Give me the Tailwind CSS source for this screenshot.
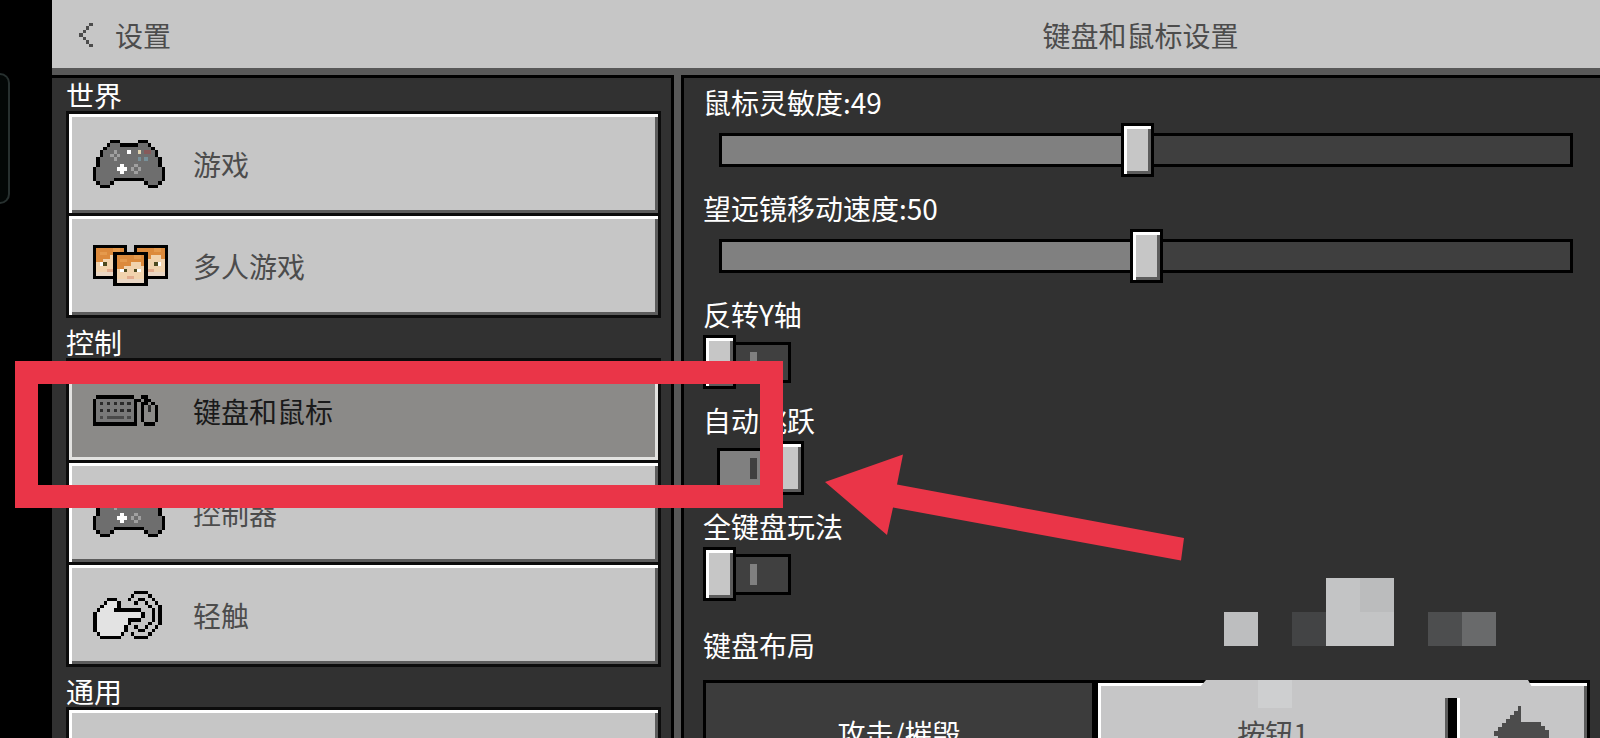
<!DOCTYPE html>
<html lang="zh-CN">
<head>
  <meta charset="UTF-8">
  <meta name="viewport" content="width=device-width, initial-scale=1">
  <title>键盘和鼠标设置</title>
  <script src="https://cdn.jsdelivr.net/npm/@tailwindcss/browser@4"></script>
</head>
<body class="relative flex h-screen overflow-hidden bg-black font-['Noto_Sans_CJK_SC',sans-serif] text-[28px] leading-8 font-normal text-white">

  <!-- Phone edge handle -->
  <div class="w-[52px] shrink-0 pt-[73px]">
    <div class="h-[131px] w-[10px] rounded-r-xl border-2 border-l-0 border-[#27302f] bg-[#030706]"></div>
  </div>

  <div class="flex min-w-0 flex-1 flex-col bg-[#585858]">
    <header class="grid h-[68px] shrink-0 grid-cols-[622fr_919fr] items-center gap-[7px] bg-[#c6c6c6] pt-px text-[#4c4c4c]">
      <button type="button" class="flex items-center gap-[22px] pl-[27px] text-left">
        <svg class="h-6 w-[14px]" viewBox="0 0 4 7" shape-rendering="crispEdges" stroke="#4c4c4c" aria-hidden="true">
          <path d="M3 .5h1M2 1.5h1M1 2.5h1M0 3.5h1M1 4.5h1M2 5.5h1M3 6.5h1"/>
        </svg>
        <span>设置</span>
      </button>
      <h1 class="text-center">键盘和鼠标设置</h1>
    </header>

    <main class="mt-[7px] grid min-h-0 flex-1 grid-cols-[622fr_919fr] gap-[7px]">

      <!-- Sidebar -->
      <nav class="min-w-0 overflow-hidden border-t-[3px] border-r-[3px] border-black bg-[#313131] pt-px pr-[10px] pl-[14px]">
        <h2>世界</h2>
        <div class="flex flex-col gap-[3px] border-[3px] border-[#0c0c0c] bg-[#0c0c0c] text-[#4c4c4c]">
          <button type="button" class="flex h-[99px] items-center bg-[#c6c6c6] pl-6 text-left shadow-[inset_3px_3px_0_#fff,inset_-3px_-3px_0_#5c5c5c]">
            <span class="w-[100px] shrink-0">
              <svg class="h-12 w-[72px]" viewBox="0 0 21 14" shape-rendering="crispEdges" fill="none" aria-hidden="true">
                <path fill="#6e6e6e" d="M5 1h3v1h5v-1h3v1h1v1h1v2h1v3h1v4h-1v1h-3v-1h-1v-1h-9v1h-1v1h-3v-1h-1v-4h1v-3h1v-2h1v-1h1z"/>
                <path stroke="#000" d="M5 .5h3M13 .5h3M4 1.5h1M8 1.5h5M16 1.5h1M3 2.5h1M17 2.5h1M2.5 3v2M18.5 3v2M1.5 5v3M19.5 5v3M.5 8v4M20.5 8v4M1 12.5h1M5 12.5h1M6 11.5h9M15 12.5h1M19 12.5h1M2 13.5h3M16 13.5h3"/>
                <path stroke="#a0a0a0" d="M6 3.5h1M5 4.5h1M7 4.5h1M6 5.5h1M12 7.5h1M11 8.5h1M13 8.5h1M12 9.5h1"/>
                <path stroke="#fff" d="M10 3.5h1M8 7.5h1M7 8.5h3M8 9.5h1"/>
                <path stroke="#e0d3b0" d="M13 3.5h1"/>
                <path stroke="#875a5a" d="M15 3.5h2"/>
                <path stroke="#779099" d="M13 5.5h1M15 5.5h1"/>
              </svg>
            </span>
            <span>游戏</span>
          </button>
          <button type="button" class="flex h-[99px] items-center bg-[#c6c6c6] pl-6 text-left shadow-[inset_3px_3px_0_#fff,inset_-3px_-3px_0_#5c5c5c]">
            <span class="w-[100px] shrink-0">
              <svg class="h-[41px] w-[75px]" viewBox="0 0 22 12" shape-rendering="crispEdges" aria-hidden="true">
                <defs>
                  <g id="head">
                    <path fill="#000" d="M0 0h10v10h-10z"/>
                    <path fill="#f1d3ae" d="M1 1h8v8h-8z"/>
                    <path fill="#dc8a3c" d="M1 1h8v3h-1v-1h-3v1h-2v1h-2z"/>
                    <path fill="#e59a4d" d="M2 2h2v1h-2zM6 1h2v1h-2z"/>
                    <path fill="#fff" d="M2 5h1v1h-1zM7 5h1v1h-1z"/>
                    <path fill="#4d4a20" d="M3 5h1v1h-1zM6 5h1v1h-1z"/>
                    <path fill="#e2ab8d" d="M4 7h2v1h-2z"/>
                    <path fill="#e9d6c4" d="M1 8h8v1h-8z"/>
                  </g>
                </defs>
                <use href="#head"/>
                <use href="#head" x="12"/>
                <use href="#head" x="6" y="2"/>
              </svg>
            </span>
            <span>多人游戏</span>
          </button>
        </div>

        <h2 class="pt-2">控制</h2>
        <div class="flex flex-col gap-[3px] border-[3px] border-[#0c0c0c] bg-[#0c0c0c] text-[#4c4c4c]">
          <button type="button" aria-current="page" class="flex h-[99px] items-center bg-[#8b8a88] pl-6 text-left text-[#1a1a1a] shadow-[inset_0_0_0_3px_#e2e2e0]">
            <span class="w-[100px] shrink-0">
              <svg class="h-[31px] w-[65px]" viewBox="0 0 19 9" shape-rendering="crispEdges" fill="none" aria-hidden="true">
                <path fill="#797979" d="M1 1h11v7h-11z"/>
                <path fill="#8b8a88" d="M15 3h3v5h-3z"/>
                <path stroke="#000" d="M1 .5h11M.5 1v8M12.5 1v8M1 8.5h11M13 1.5h1M14 .5h2M15 1.5h2M14 2.5h2M17 2.5h1M14.5 3v5M18.5 3v5M15 8.5h3"/>
                <path stroke="#2b2b2b" d="M2 2.5h1M4 2.5h1M6 2.5h1M8 2.5h1M10 2.5h1M2 4.5h1M4 4.5h1M6 4.5h1M8 4.5h1M10 4.5h1M16.5 3v2"/>
                <path stroke="#4a4a4a" d="M2 6.5h1M4 6.5h5M10 6.5h1"/>
              </svg>
            </span>
            <span>键盘和鼠标</span>
          </button>
          <button type="button" class="flex h-[99px] items-center bg-[#c6c6c6] pl-6 text-left shadow-[inset_3px_3px_0_#fff,inset_-3px_-3px_0_#5c5c5c]">
            <span class="w-[100px] shrink-0">
              <svg class="h-12 w-[72px]" viewBox="0 0 21 14" shape-rendering="crispEdges" fill="none" aria-hidden="true">
                <path fill="#6e6e6e" d="M5 1h3v1h5v-1h3v1h1v1h1v2h1v3h1v4h-1v1h-3v-1h-1v-1h-9v1h-1v1h-3v-1h-1v-4h1v-3h1v-2h1v-1h1z"/>
                <path stroke="#000" d="M5 .5h3M13 .5h3M4 1.5h1M8 1.5h5M16 1.5h1M3 2.5h1M17 2.5h1M2.5 3v2M18.5 3v2M1.5 5v3M19.5 5v3M.5 8v4M20.5 8v4M1 12.5h1M5 12.5h1M6 11.5h9M15 12.5h1M19 12.5h1M2 13.5h3M16 13.5h3"/>
                <path stroke="#a0a0a0" d="M6 3.5h1M5 4.5h1M7 4.5h1M6 5.5h1M12 7.5h1M11 8.5h1M13 8.5h1M12 9.5h1"/>
                <path stroke="#fff" d="M10 3.5h1M8 7.5h1M7 8.5h3M8 9.5h1"/>
              </svg>
            </span>
            <span>控制器</span>
          </button>
          <button type="button" class="flex h-[99px] items-center bg-[#c6c6c6] pl-6 text-left shadow-[inset_3px_3px_0_#fff,inset_-3px_-3px_0_#5c5c5c]">
            <span class="w-[100px] shrink-0">
              <svg class="h-12 w-[69px]" viewBox="0 0 20 14" shape-rendering="crispEdges" fill="none" aria-hidden="true">
                <path fill="#e3e3e3" d="M4 3h3v3h7v2h-4v2h-1v2h-1v1h-6v-1h-1v-6h1v-1h1v-1h1z"/>
                <path stroke="#000" d="M4 2.5h3M3 3.5h1M7.5 3v2M2 4.5h1M1 5.5h1M6 5.5h8M.5 6v6M14.5 6v2M10 8.5h4M10 9.5h1M9.5 10v2M1 12.5h1M8 12.5h1M2 13.5h6"/>
                <path stroke="#000" d="M12 .5h4M11 1.5h1M16 1.5h1M10 2.5h1M17 2.5h1M18 3.5h1M19.5 4v6M18 10.5h1M17 11.5h1M16 12.5h1M11 12.5h1M12 13.5h4"/>
                <path stroke="#000" d="M13 2.5h2M12 3.5h1M15 3.5h1M16 4.5h1M17.5 5v4M16 9.5h1M15 10.5h1M12 10.5h1M13 11.5h2"/>
              </svg>
            </span>
            <span>轻触</span>
          </button>
        </div>

        <h2 class="pt-2">通用</h2>
        <div class="border-[3px] border-[#0c0c0c] bg-[#0c0c0c]">
          <button type="button" aria-label="通用" class="block h-[99px] w-full bg-[#c6c6c6] shadow-[inset_3px_3px_0_#fff,inset_-3px_-3px_0_#5c5c5c]"></button>
        </div>
      </nav>

      <!-- Settings -->
      <section class="min-w-0 overflow-hidden border-t-[3px] border-l-[3px] border-black bg-[#313131] pt-2 pl-[19px]">
        <div class="flex flex-col gap-[15px]">
          <div class="flex flex-col gap-[5px]">
            <label for="sensitivity">鼠标灵敏度:49</label>
            <div class="flex h-[54px] items-center pr-[27px] pl-4">
              <input id="sensitivity" type="range" min="0" max="100" value="49" style="--fill: 49%"
                class="h-[54px] w-full appearance-none bg-transparent [&::-webkit-slider-runnable-track]:h-[34px] [&::-webkit-slider-runnable-track]:border-[3px] [&::-webkit-slider-runnable-track]:border-black [&::-webkit-slider-runnable-track]:bg-[linear-gradient(to_right,#808080_var(--fill),#3f3f3f_var(--fill))] [&::-webkit-slider-thumb]:mt-[-13px] [&::-webkit-slider-thumb]:h-[54px] [&::-webkit-slider-thumb]:w-[33px] [&::-webkit-slider-thumb]:appearance-none [&::-webkit-slider-thumb]:border-[3px] [&::-webkit-slider-thumb]:border-black [&::-webkit-slider-thumb]:bg-[#c6c6c6] [&::-webkit-slider-thumb]:shadow-[inset_3px_3px_0_#fff,inset_-3px_-3px_0_#5c5c5c]">
            </div>
          </div>
          <div class="flex flex-col gap-[5px]">
            <label for="spyglass">望远镜移动速度:50</label>
            <div class="flex h-[54px] items-center pr-[27px] pl-4">
              <input id="spyglass" type="range" min="0" max="100" value="50" style="--fill: 50%"
                class="h-[54px] w-full appearance-none bg-transparent [&::-webkit-slider-runnable-track]:h-[34px] [&::-webkit-slider-runnable-track]:border-[3px] [&::-webkit-slider-runnable-track]:border-black [&::-webkit-slider-runnable-track]:bg-[linear-gradient(to_right,#808080_var(--fill),#3f3f3f_var(--fill))] [&::-webkit-slider-thumb]:mt-[-13px] [&::-webkit-slider-thumb]:h-[54px] [&::-webkit-slider-thumb]:w-[33px] [&::-webkit-slider-thumb]:appearance-none [&::-webkit-slider-thumb]:border-[3px] [&::-webkit-slider-thumb]:border-black [&::-webkit-slider-thumb]:bg-[#c6c6c6] [&::-webkit-slider-thumb]:shadow-[inset_3px_3px_0_#fff,inset_-3px_-3px_0_#5c5c5c]">
            </div>
          </div>
          <div class="flex flex-col gap-[5px]">
            <label for="invert-y">反转Y轴</label>
            <div class="flex h-[54px] items-center pl-[14px]">
              <input id="invert-y" type="checkbox" role="switch"
                class="relative h-[41px] w-[74px] appearance-none border-[3px] border-black bg-[#404040] before:absolute before:top-[-10px] before:left-[-17px] before:h-[54px] before:w-[33px] before:border-[3px] before:border-black before:bg-[#c6c6c6] before:shadow-[inset_3px_3px_0_#fff,inset_-3px_-3px_0_#5c5c5c] after:absolute after:top-[7px] after:left-[30px] after:h-[21px] after:w-[7px] after:bg-[#808080] checked:bg-[#808080] checked:before:left-[51px] checked:after:bg-[#404040]">
            </div>
          </div>
          <div class="flex flex-col gap-[5px]">
            <label for="auto-jump">自动跳跃</label>
            <div class="flex h-[54px] items-center pl-[14px]">
              <input id="auto-jump" type="checkbox" role="switch" checked
                class="relative h-[41px] w-[74px] appearance-none border-[3px] border-black bg-[#404040] before:absolute before:top-[-10px] before:left-[-17px] before:h-[54px] before:w-[33px] before:border-[3px] before:border-black before:bg-[#c6c6c6] before:shadow-[inset_3px_3px_0_#fff,inset_-3px_-3px_0_#5c5c5c] after:absolute after:top-[7px] after:left-[30px] after:h-[21px] after:w-[7px] after:bg-[#808080] checked:bg-[#808080] checked:before:left-[51px] checked:after:bg-[#404040]">
            </div>
          </div>
          <div class="flex flex-col gap-[5px]">
            <label for="full-keyboard">全键盘玩法</label>
            <div class="flex h-[54px] items-center pl-[14px]">
              <input id="full-keyboard" type="checkbox" role="switch"
                class="relative h-[41px] w-[74px] appearance-none border-[3px] border-black bg-[#404040] before:absolute before:top-[-10px] before:left-[-17px] before:h-[54px] before:w-[33px] before:border-[3px] before:border-black before:bg-[#c6c6c6] before:shadow-[inset_3px_3px_0_#fff,inset_-3px_-3px_0_#5c5c5c] after:absolute after:top-[7px] after:left-[30px] after:h-[21px] after:w-[7px] after:bg-[#808080] checked:bg-[#808080] checked:before:left-[51px] checked:after:bg-[#404040]">
            </div>
          </div>
        </div>

        <h2 class="mt-7">键盘布局</h2>
        <div class="mt-[19px] mr-[10px] flex h-[105px] bg-black p-[3px]">
          <div class="flex flex-[386] items-center justify-center bg-[#3c3c3c]">攻击/摧毁</div>
          <button type="button" class="ml-[6px] flex-[350] bg-[#c6c6c7] text-[#4c4c4c] shadow-[inset_3px_3px_0_#fff,inset_-3px_-3px_0_#5c5c5c]">按钮1</button>
          <button type="button" aria-label="重置" class="ml-[9px] flex flex-[130] items-center justify-center bg-[#c6c6c7] shadow-[inset_3px_3px_0_#fff,inset_-3px_-3px_0_#5c5c5c]">
            <svg class="h-[54px] w-[56px]" viewBox="0 0 56 54" fill="#4c4c4c" shape-rendering="crispEdges" aria-hidden="true">
              <path d="M24 0h3v16h20v4h4v4h4v18h-4v5h-4v-9h-20v16h-3v-4h-4v-4h-4v-4h-4v-4h-4v-4h-4v-4h-4v-5h4v-4h4v-4h4v-4h4v-4h4v-4h4z"/>
            </svg>
          </button>
        </div>
      </section>
    </main>
  </div>

  <!-- Mosaic patches and red markup drawn over the screen -->
  <svg class="pointer-events-none absolute top-0 left-0 h-[738px] w-[1600px]" viewBox="0 0 1600 738" aria-hidden="true">
    <path fill="#bdbebf" d="M1224 612h34v34h-34z"/>
    <path fill="#434445" d="M1292 612h34v34h-34z"/>
    <path fill="#c3c4c5" d="M1326 578h68v68h-68z"/>
    <path fill="#bbbcbd" d="M1360 578h34v34h-34z"/>
    <path fill="#4d4e4f" d="M1428 612h34v34h-34z"/>
    <path fill="#696a6b" d="M1462 612h34v34h-34z"/>
    <path fill="#c6c6c7" d="M1206 680h322l4 7h-72v11h-16v-11h-244z"/>
    <path fill="#cecfd0" d="M1258 680h34v28h-34z"/>
    <path fill="none" stroke="#ea3548" stroke-width="23" d="M26.500 372.500h745v124h-745z"/>
    <path fill="#ea3548" d="M825 482L903 454.500L897 484.500L1184 538L1181 560.500L893 507.500L887 535z"/>
  </svg>
</body>
</html>
